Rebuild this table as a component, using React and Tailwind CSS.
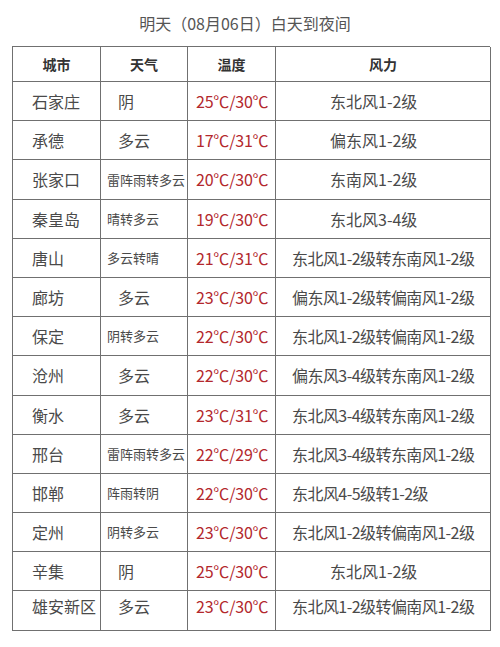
const rows = [
  { city: "石家庄", weather: "阴", temp: "25℃/30℃", wind: "东北风1-2级" },
  { city: "承德", weather: "多云", temp: "17℃/31℃", wind: "偏东风1-2级" },
  { city: "张家口", weather: "雷阵雨转多云", small: true, temp: "20℃/30℃", wind: "东南风1-2级" },
  { city: "秦皇岛", weather: "晴转多云", small: true, temp: "19℃/30℃", wind: "东北风3-4级" },
  { city: "唐山", weather: "多云转晴", small: true, temp: "21℃/31℃", wind: "东北风1-2级转东南风1-2级", long: true },
  { city: "廊坊", weather: "多云", temp: "23℃/30℃", wind: "偏东风1-2级转偏南风1-2级", long: true },
  { city: "保定", weather: "阴转多云", small: true, temp: "22℃/30℃", wind: "东北风1-2级转偏南风1-2级", long: true },
  { city: "沧州", weather: "多云", temp: "22℃/30℃", wind: "偏东风3-4级转东南风1-2级", long: true },
  { city: "衡水", weather: "多云", temp: "23℃/31℃", wind: "东北风3-4级转东南风1-2级", long: true },
  { city: "邢台", weather: "雷阵雨转多云", small: true, temp: "22℃/29℃", wind: "东北风3-4级转东南风1-2级", long: true },
  { city: "邯郸", weather: "阵雨转阴", small: true, temp: "22℃/30℃", wind: "东北风4-5级转1-2级", long: true },
  { city: "定州", weather: "阴转多云", small: true, temp: "23℃/30℃", wind: "东北风1-2级转偏南风1-2级", long: true },
  { city: "辛集", weather: "阴", temp: "25℃/30℃", wind: "东北风1-2级" },
  { city: "雄安新区", weather: "多云", temp: "23℃/30℃", wind: "东北风1-2级转偏南风1-2级", long: true },
];

export default function App() {
  return (
    <div
      className="w-[500px] h-[647px] bg-white text-[#4a4a4a] overflow-hidden"
      style={{ fontFamily: '"Noto Sans CJK SC", sans-serif' }}
    >
      <div className="h-[46px] flex items-center justify-center pr-[10px] text-[16px] text-[#555]">
        明天（08月06日）白天到夜间
      </div>
      <div className="mx-[12px] w-[478px] grid grid-cols-[88px_87px_88px_215px] border-l border-t border-[#707070]">
        {["城市", "天气", "温度", "风力"].map((h) => (
          <div
            key={h}
            className="h-[35px] flex items-center justify-center border-r border-b border-[#707070] text-[14px] font-bold text-[#333]"
          >
            {h}
          </div>
        ))}
        {rows.map((r, i) => {
          const last = i === rows.length - 1;
          const cell = `h-[39.2px] flex border-r border-b border-[#707070] ${last ? "items-start pt-[3px]" : "items-center"}`;
          return [
            <div key={`c${i}`} className={`${cell} pl-[19px] text-[16px]`}>
              {r.city}
            </div>,
            <div
              key={`w${i}`}
              className={`${cell} ${r.small ? "pl-[6px] text-[13px]" : "pl-[17px] text-[16px]"}`}
            >
              {r.weather}
            </div>,
            <div key={`t${i}`} className={`${cell} pl-[8px] text-[16px] tracking-[-0.2px] text-[#b3282d]`}>
              {r.temp}
            </div>,
            <div
              key={`f${i}`}
              className={`${cell} ${r.long ? "pl-[16px] tracking-[-0.55px]" : "pl-[54px]"} text-[16px] whitespace-nowrap`}
            >
              {r.wind}
            </div>,
          ];
        })}
      </div>
    </div>
  );
}
